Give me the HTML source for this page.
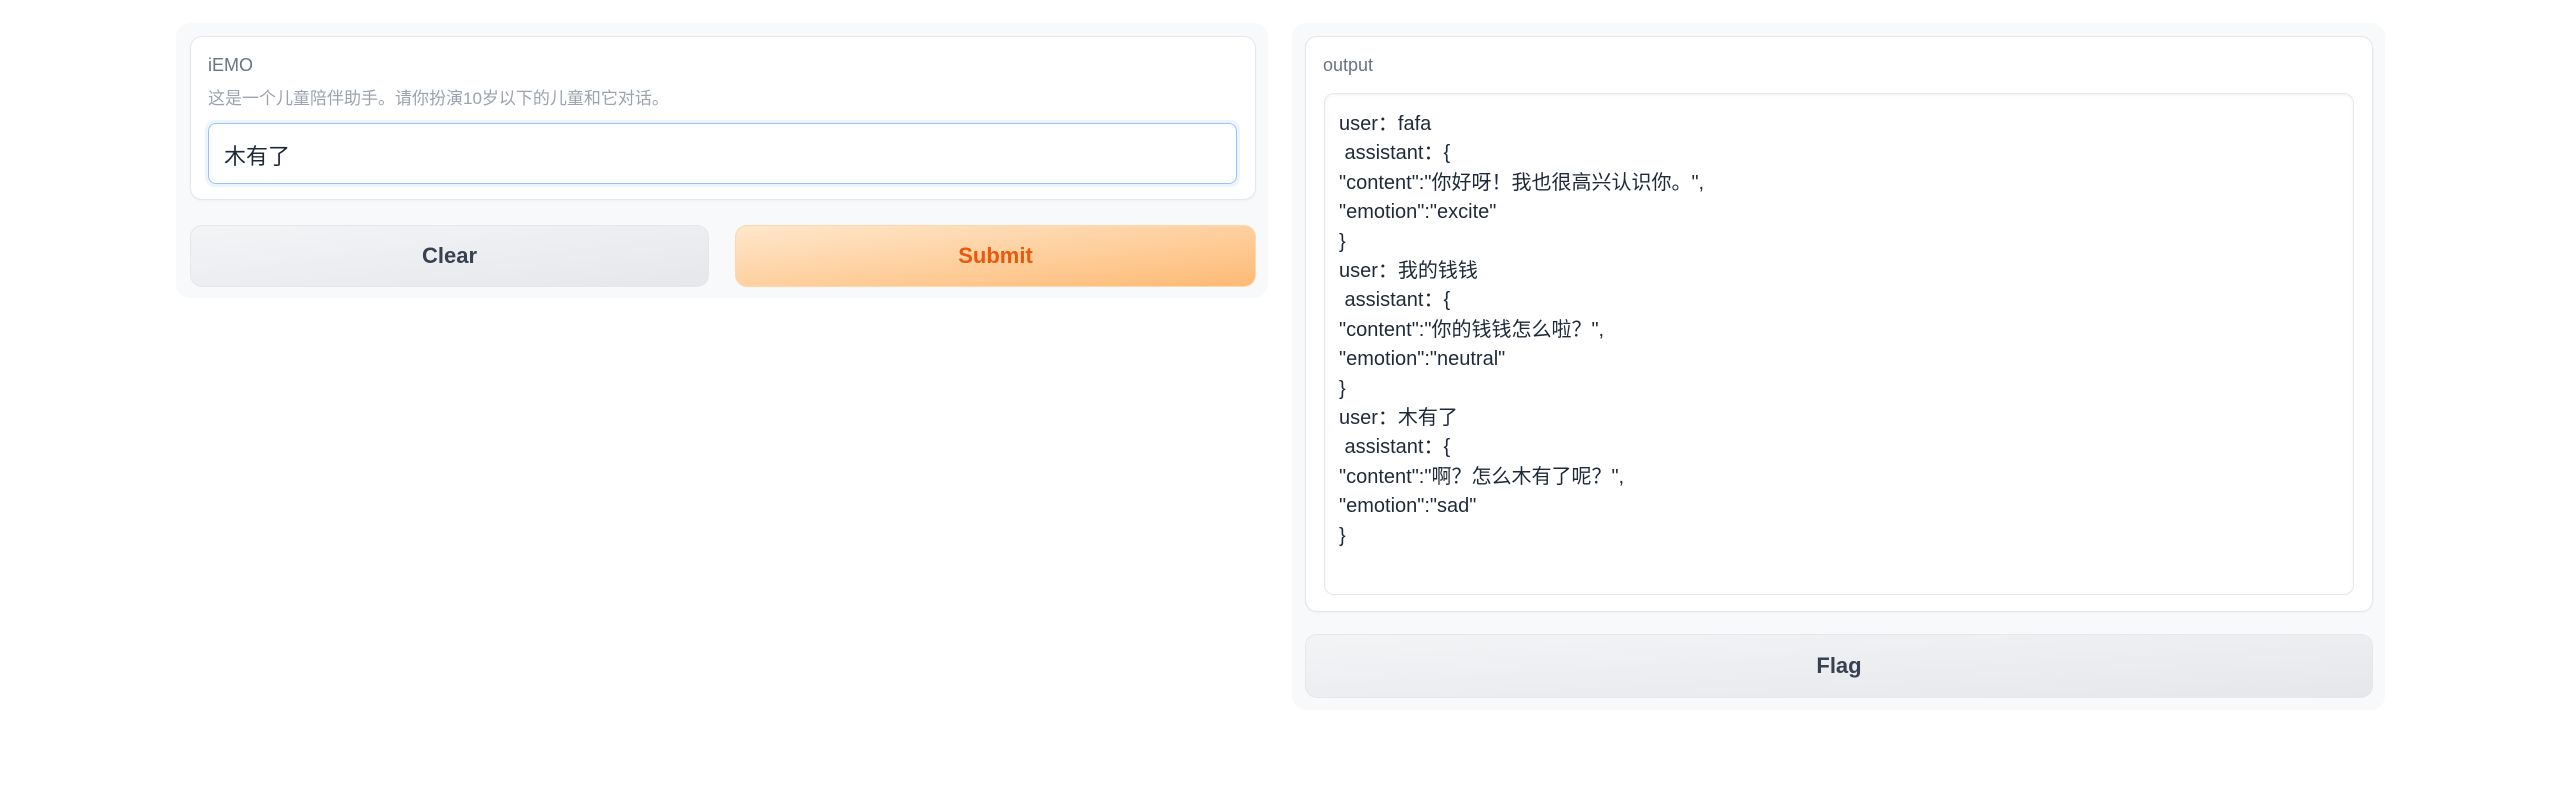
<!DOCTYPE html>
<html><head><meta charset="utf-8"><style>
*{box-sizing:border-box;margin:0;padding:0}
body{width:2557px;height:795px;background:#fff;font-family:"Liberation Sans","Noto Sans CJK SC",sans-serif;position:relative;overflow:hidden;color:#1f2937}
.panel{position:absolute;background:#f8f9fb;border-radius:14px}
.card{position:absolute;background:#fff;border:1.5px solid #e5e7eb;border-radius:12px;box-shadow:0 1px 2px rgba(0,0,0,.04)}
.lbl{position:absolute;font-size:18px;color:#6b7280}
.btn{position:absolute;border-radius:12px;display:flex;align-items:center;justify-content:center;font-size:22px;font-weight:bold;border:1.5px solid #e5e7eb}
.clear{background:linear-gradient(to bottom right,#f3f4f6,#e5e7eb);color:#374151}
.submit{background:linear-gradient(to bottom right,#ffe7cc,#fdba74);color:#ea580c;border-color:#fed7aa}
.out{position:absolute;left:1324px;top:93px;width:1030px;height:502px;border:1.5px solid #e5e7eb;border-radius:10px;box-shadow:inset 0 1px 3px rgba(0,0,0,.05);padding:16px 14px;font-size:20px;line-height:29.4px;color:#1f2937;white-space:pre}
</style></head><body>
<div class="panel" style="left:176px;top:23px;width:1092px;height:275px"></div>
<div class="card" style="left:190px;top:36px;width:1066px;height:164px"></div>
<div class="lbl" style="left:208px;top:55px">iEMO</div>
<div class="lbl" style="left:208px;top:84px;font-size:17px;color:#9ca3af">这是一个儿童陪伴助手。请你扮演10岁以下的儿童和它对话。</div>
<div style="position:absolute;left:205px;top:120px;width:1035px;height:67px;border-radius:10px;background:#eef4fd"></div>
<div style="position:absolute;left:208px;top:123px;width:1029px;height:61px;border:1.5px solid #93c5fd;border-radius:8px;background:#fff;font-size:22px;padding:15px 15px;color:#1f2937">木有了</div>
<div class="btn clear" style="left:190px;top:225px;width:519px;height:62px">Clear</div>
<div class="btn submit" style="left:735px;top:225px;width:521px;height:62px">Submit</div>

<div class="panel" style="left:1292px;top:23px;width:1093px;height:687px"></div>
<div class="card" style="left:1305px;top:36px;width:1068px;height:576px"></div>
<div class="lbl" style="left:1323px;top:55px">output</div>
<div class="out">user：fafa
 assistant：{
"content":"你好呀！我也很高兴认识你。",
"emotion":"excite"
}
user：我的钱钱
 assistant：{
"content":"你的钱钱怎么啦？",
"emotion":"neutral"
}
user：木有了
 assistant：{
"content":"啊？怎么木有了呢？",
"emotion":"sad"
}</div>
<div class="btn clear" style="left:1305px;top:634px;width:1068px;height:64px">Flag</div>
</body></html>
